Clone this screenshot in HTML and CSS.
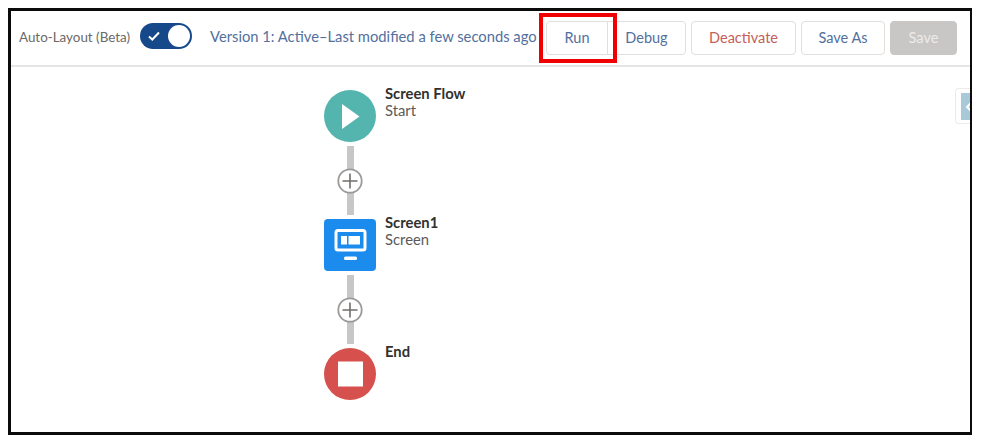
FILE: index.html
```html
<!DOCTYPE html>
<html lang="en">
<head>
    <meta charset="UTF-8">
    <title>Flow Builder</title>
    <link rel="stylesheet" href="styles.css">
</head>
<body>
    <div class="frame">
        <div class="toolbar">
            <span class="auto-label">Auto-Layout (Beta)</span>
            <span class="toggle">
                <svg class="check" width="14" height="12" viewBox="0 0 14 12"><path d="M2 6.5 5.3 9.5 12 2.5" fill="none" stroke="#fff" stroke-width="2"/></svg>
                <span class="knob"></span>
            </span>
            <span class="version">Version 1: Active–Last modified a few seconds ago</span>
            <div class="btn-group">
                <button class="btn btn-run">Run</button>
                <button class="btn btn-debug">Debug</button>
            </div>
            <button class="btn btn-deactivate">Deactivate</button>
            <button class="btn btn-saveas">Save As</button>
            <button class="btn btn-save">Save</button>
        </div>
        <div class="canvas">
            <div class="node">
                <div class="icon icon-start">
                    <svg width="52" height="52" viewBox="0 0 52 52"><path d="M18 14V39L35.5 26.5Z" fill="#fff"/></svg>
                </div>
                <div class="node-text"><b>Screen Flow</b><span>Start</span></div>
            </div>
            <div class="connector">
                <span class="plus"><svg width="26" height="26" viewBox="0 0 26 26"><circle cx="13" cy="13" r="11.7" fill="#fff" stroke="#9c9a98" stroke-width="1.8"/><path d="M13 5.5v15M5.5 13h15" stroke="#706e6b" stroke-width="1.6"/></svg></span>
            </div>
            <div class="node">
                <div class="icon icon-screen">
                    <svg width="52" height="52" viewBox="0 0 52 52">
                        <rect x="12" y="11.5" width="29" height="19.5" rx="2" fill="none" stroke="#fff" stroke-width="3"/>
                        <rect x="17" y="17" width="6" height="8.5" fill="#fff"/>
                        <rect x="24.5" y="17" width="11.5" height="8.5" fill="#fff"/>
                        <rect x="20" y="37.5" width="13" height="3.5" rx="1.5" fill="#fff"/>
                    </svg>
                </div>
                <div class="node-text"><b>Screen1</b><span>Screen</span></div>
            </div>
            <div class="connector">
                <span class="plus"><svg width="26" height="26" viewBox="0 0 26 26"><circle cx="13" cy="13" r="11.7" fill="#fff" stroke="#9c9a98" stroke-width="1.8"/><path d="M13 5.5v15M5.5 13h15" stroke="#706e6b" stroke-width="1.6"/></svg></span>
            </div>
            <div class="node">
                <div class="icon icon-end">
                    <svg width="52" height="52" viewBox="0 0 52 52"><rect x="14" y="13.5" width="25" height="25" fill="#fff"/></svg>
                </div>
                <div class="node-text"><b>End</b></div>
            </div>
            <div class="side-tab">
                <span class="side-inner"><svg width="9" height="12" viewBox="0 0 9 12"><path d="M7 2 3 6l4 4" fill="none" stroke="#fff" stroke-width="2"/></svg></span>
            </div>
        </div>
        <div class="highlight"></div>
    </div>
</body>
</html>
```

FILE: styles.css
```css
body {
    margin: 0;
    background: #fff;
    font-family: "Lato", "Liberation Sans", sans-serif;
    color: #3e3e3c;
}

.frame {
    position: relative;
    box-sizing: border-box;
    width: 964px;
    height: 427px;
    margin: 8px 0 0 8px;
    border: solid #0b0b0b;
    border-width: 3px 2px 3px 3px;
    overflow: hidden;
}

/*top bar*/
.toolbar {
    box-sizing: border-box;
    height: 56px;
    padding: 10px 13px 0 8px;
    display: flex;
    align-items: flex-start;
    border-bottom: 2px solid #e6e5e4;
}

.auto-label {
    margin-top: 8px;
    font-size: 13.4px;
    line-height: 16px;
    color: #6b6967;
    width: 121px;
    white-space: nowrap;
}

.toggle {
    box-sizing: border-box;
    width: 52px;
    height: 26px;
    margin-top: 2px;
    padding: 0 2px 0 7px;
    background: #16498a;
    border-radius: 13px;
    display: flex;
    align-items: center;
    justify-content: space-between;
}

.knob {
    width: 22px;
    height: 22px;
    background: #fff;
    border-radius: 50%;
}

.version {
    margin: 5px 0 0 18px;
    width: 336px;
    font-size: 14.75px;
    line-height: 20px;
    color: #52709e;
    white-space: nowrap;
}

.btn {
    box-sizing: border-box;
    height: 34px;
    padding: 0 0 2px;
    background: #fff;
    border: 1px solid #e0dfdd;
    border-radius: 4px;
    font-family: inherit;
    font-size: 14.5px;
    color: #52709e;
}

.btn-group {
    display: flex;
}

.btn-run {
    width: 62px;
    border-radius: 4px 0 0 4px;
}

.btn-debug {
    width: 79px;
    margin-left: -1px;
    border-radius: 0 4px 4px 0;
}

.btn-deactivate {
    width: 105px;
    margin-left: 5px;
    color: #c4605a;
}

.btn-saveas {
    width: 84px;
    margin-left: 5px;
}

.btn-save {
    width: 67px;
    margin-left: 5px;
    background: #c9c7c5;
    border-color: #c9c7c5;
    color: #ecebea;
}

/*the flow itself*/
.canvas {
    padding: 23px 0 0 313px;
}

.node {
    display: flex;
    align-items: flex-start;
    height: 52px;
}

.icon {
    width: 52px;
    height: 52px;
    flex: none;
}

.icon svg {
    display: block;
}

.icon-start {
    background: #54b5ae;
    border-radius: 50%;
}

.icon-screen {
    background: #1b8ced;
    border-radius: 4px;
}

.icon-end {
    background: #d6504d;
    border-radius: 50%;
}

.node-text {
    margin-left: 9px;
    margin-top: -5px;
    font-size: 14.8px;
    line-height: 17px;
    white-space: nowrap;
}

.node-text b {
    display: block;
    font-weight: 700;
    color: #32312f;
}

.node-text span {
    display: block;
    color: #5c5a58;
}

.connector {
    position: relative;
    box-sizing: border-box;
    width: 52px;
    height: 77px;
    padding: 4px 0;
    display: flex;
    align-items: center;
    justify-content: center;
    background: linear-gradient(#c9c7c5, #c9c7c5) center / 7px 69px no-repeat;
}

.plus {
    width: 26px;
    height: 26px;
}

.plus svg {
    display: block;
}

/*overlays*/
.side-tab {
    position: absolute;
    right: 0;
    top: 77px;
    box-sizing: border-box;
    width: 15px;
    height: 36px;
    padding: 4px 0 3px 5px;
    background: #fff;
    border: 1px solid #ecebea;
    border-right: 0;
    border-radius: 4px 0 0 4px;
    display: flex;
}

.side-inner {
    flex: 1;
    padding-left: 3px;
    background: #a9c8d8;
    display: flex;
    align-items: center;
}

.highlight {
    position: absolute;
    left: 528px;
    top: 2px;
    box-sizing: border-box;
    width: 78px;
    height: 50px;
    border: 4px solid #f00000;
}
```
